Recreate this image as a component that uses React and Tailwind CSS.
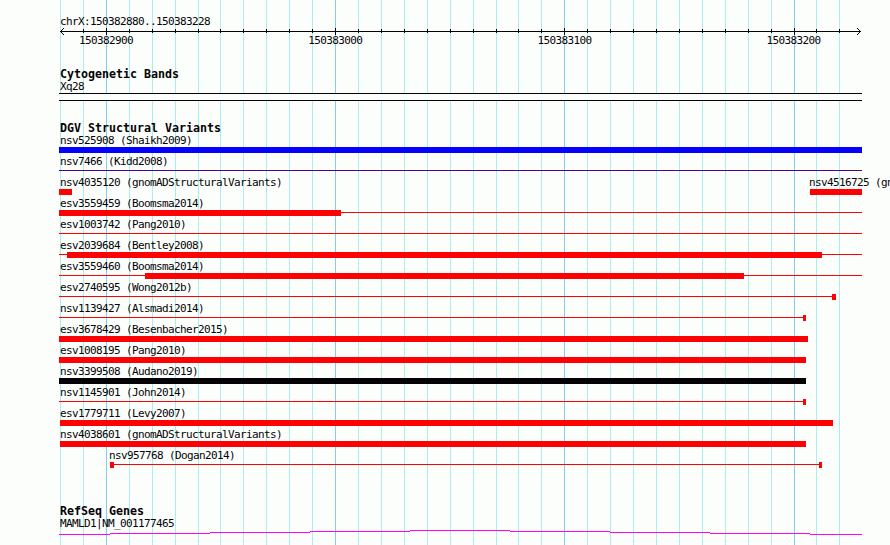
import React from 'react';

const LEFT = 59;
const GRID = [
  60, 83, 106, 129, 152, 175, 198, 220, 243, 266, 289, 312, 335, 358, 381, 404, 427, 450, 473,
  496, 518, 541, 564, 587, 610, 633, 656, 679, 702, 725, 748, 771, 794, 816, 839,
];
const MAJOR = { 106: '150382900', 335: '150383000', 564: '150383100', 794: '150383200' };

const RED = 'bg-[#fc0204]';

// Each span is [start, end, thick]; labels are [x, text].
const VARIANTS = [
  { color: 'bg-[#0402fc]', labels: [[60, 'nsv525908 (Shaikh2009)']], spans: [[59, 862, true]] },
  { color: 'bg-[#4c0284]', labels: [[60, 'nsv7466 (Kidd2008)']], spans: [[59, 862, false]] },
  {
    color: RED,
    labels: [[60, 'nsv4035120 (gnomADStructuralVariants)'], [809, 'nsv4516725 (gnomADStructuralVariants)']],
    spans: [[59, 72, true], [810, 862, true]],
  },
  { color: RED, labels: [[60, 'esv3559459 (Boomsma2014)']], spans: [[59, 341, true], [341, 862, false]] },
  { color: RED, labels: [[60, 'esv1003742 (Pang2010)']], spans: [[59, 862, false]] },
  { color: RED, labels: [[60, 'esv2039684 (Bentley2008)']], spans: [[59, 67, false], [67, 822, true], [822, 862, false]] },
  { color: RED, labels: [[60, 'esv3559460 (Boomsma2014)']], spans: [[59, 145, false], [145, 744, true], [744, 862, false]] },
  { color: RED, labels: [[60, 'esv2740595 (Wong2012b)']], spans: [[59, 832, false], [832, 836, true]] },
  { color: RED, labels: [[60, 'nsv1139427 (Alsmadi2014)']], spans: [[59, 803, false], [803, 806, true]] },
  { color: RED, labels: [[60, 'esv3678429 (Besenbacher2015)']], spans: [[59, 808, true]] },
  { color: RED, labels: [[60, 'esv1008195 (Pang2010)']], spans: [[59, 806, true]] },
  { color: 'bg-[#040204]', labels: [[60, 'nsv3399508 (Audano2019)']], spans: [[59, 806, true]] },
  { color: RED, labels: [[60, 'nsv1145901 (John2014)']], spans: [[59, 803, false], [803, 806, true]] },
  { color: RED, labels: [[60, 'esv1779711 (Levy2007)']], spans: [[60, 833, true]] },
  { color: RED, labels: [[60, 'nsv4038601 (gnomADStructuralVariants)']], spans: [[60, 806, true]] },
  { color: RED, labels: [[109, 'nsv957768 (Dogan2014)']], spans: [[110, 114, true], [114, 819, false], [819, 822, true]] },
];

function GridLines() {
  return (
    <svg className="absolute inset-0" width="890" height="545" shapeRendering="crispEdges" aria-hidden="true">
      {GRID.map((x) => (
        <rect key={x} x={x} y="0" width="1" height="545" fill={MAJOR[x] ? '#84ceec' : '#acEEEC'} />
      ))}
    </svg>
  );
}

function Label({ children }) {
  return (
    <div className="h-[13px] whitespace-pre pl-px text-[11px] leading-[13px] tracking-[-0.622px]">{children}</div>
  );
}

function Heading({ children }) {
  return <h2 className="h-3 whitespace-pre pl-px text-[11.63px] font-bold leading-3">{children}</h2>;
}

function Ruler() {
  return (
    <section className="h-[68px] pt-[15px]">
      <Label>chrX:150382880..150383228</Label>
      <svg className="block" width="803" height="7" viewBox="59 28 803 7" shapeRendering="crispEdges">
        <rect x="60" y="31" width="801" height="1" fill="#040204" />
        {GRID.slice(1).map((x) => (
          <rect key={x} x={x} y={MAJOR[x] ? 28 : 29} width="1" height={MAJOR[x] ? 7 : 4} fill="#040204" />
        ))}
        {[1, 2, 3].map((d) => (
          <g key={d} fill="#040204">
            <rect x={60 + d} y={31 - d} width="1" height="1" />
            <rect x={60 + d} y={31 + d} width="1" height="1" />
            <rect x={860 - d} y={31 - d} width="1" height="1" />
            <rect x={860 - d} y={31 + d} width="1" height="1" />
          </g>
        ))}
      </svg>
      <div className="-mt-px flex gap-[175.2px] pl-[19px]">
        {Object.values(MAJOR).map((t) => (
          <div key={t} className="w-[54px]"><Label>{t}</Label></div>
        ))}
      </div>
    </section>
  );
}

function Offsets({ items, render }) {
  let end = LEFT;
  return items.map((item, i) => {
    const gap = item[0] - end;
    end = item[1];
    return <React.Fragment key={i}>{render(item, gap)}</React.Fragment>;
  });
}

function Variant({ color, labels, spans }) {
  const texts = labels.map(([x, t]) => [x - 1, x - 1 + t.length * 6, t]);
  return (
    <li className="h-[21px]">
      <div className="flex">
        <Offsets
          items={texts}
          render={([a, b, t], gap) => (
            <div className="shrink-0" style={{ marginLeft: gap, width: b - a }}><Label>{t}</Label></div>
          )}
        />
      </div>
      <div className="flex h-1.5">
        <Offsets
          items={spans}
          render={([a, b, thick], gap) => (
            <div
              className={`${color} shrink-0 ${thick ? 'h-1.5' : 'mt-0.5 h-px'}`}
              style={{ marginLeft: gap, width: b - a }}
            />
          )}
        />
      </div>
    </li>
  );
}

function GeneTrack() {
  const levels = [4, 3, 2, 1, 0, 1, 2, 3, 4];
  return (
    <svg className="block" width="803" height="5" shapeRendering="crispEdges">
      {levels.map((y, i) => {
        const start = i === 0 ? 0 : i * 100 - 49;
        const end = Math.min(803, i * 100 + 51);
        return <rect key={i} x={start} y={y} width={end - start} height="1" fill="#fc02fc" />;
      })}
    </svg>
  );
}

export default function App() {
  return (
    <div className="relative h-[545px] w-[890px] overflow-hidden bg-[#fcfefc] font-['DejaVu_Sans_Mono',monospace] text-[#040204]">
      <GridLines />
      <main className="relative pl-[59px]">
        <Ruler />
        <section className="h-[54px]">
          <Heading>Cytogenetic Bands</Heading>
          <Label>Xq28</Label>
          <div className="h-2 w-[803px] border-y border-[#040204] bg-[#fcfefc]" />
        </section>
        <section className="h-[383px]">
          <Heading>DGV Structural Variants</Heading>
          <ul>
            {VARIANTS.map((v) => <Variant key={v.labels[0][1]} {...v} />)}
          </ul>
        </section>
        <section>
          <Heading>RefSeq Genes</Heading>
          <Label>MAMLD1|NM_001177465</Label>
          <GeneTrack />
        </section>
      </main>
    </div>
  );
}
